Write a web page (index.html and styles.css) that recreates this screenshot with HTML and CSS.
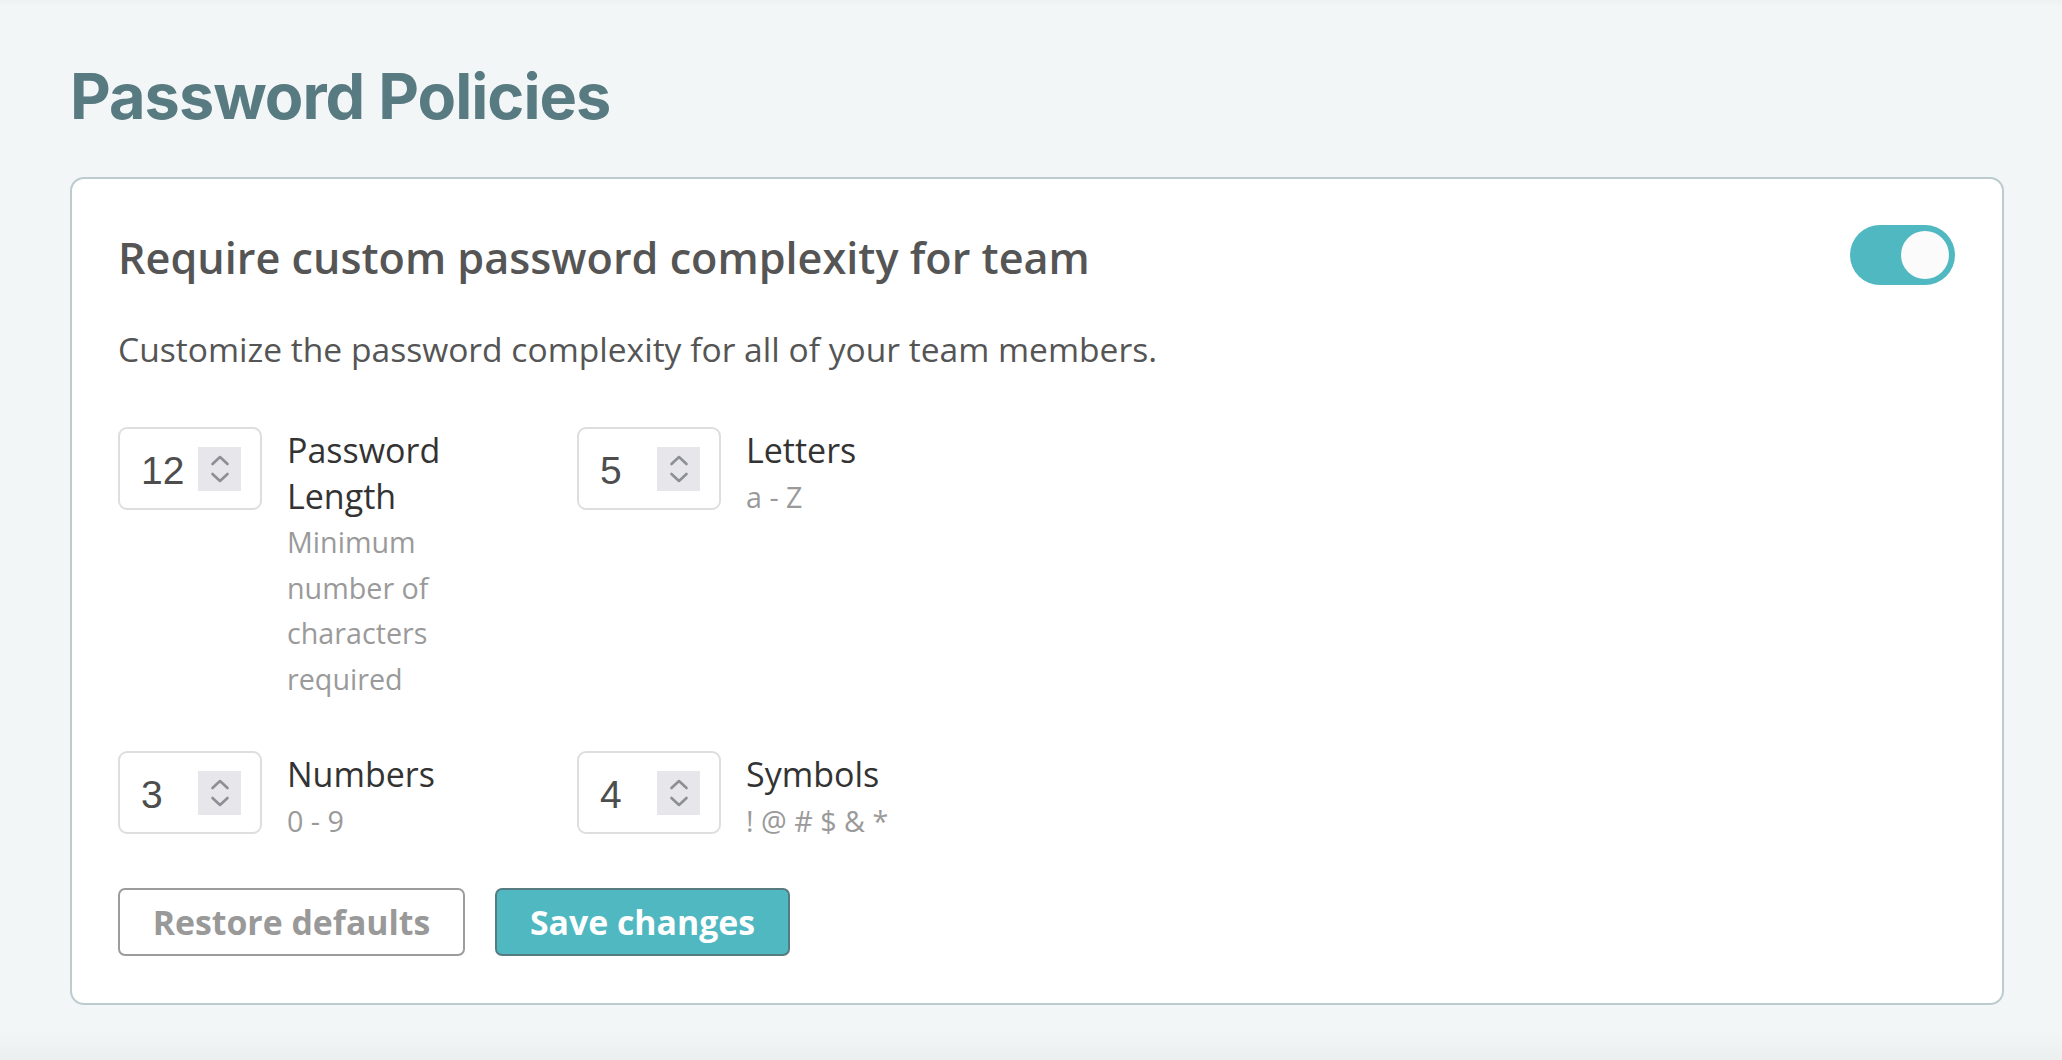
FILE: index.html
```html
<!DOCTYPE html>
<html lang="en">
<head>
<meta charset="utf-8">
<title>Password Policies</title>
<link rel="stylesheet" href="styles.css">
</head>
<body>
<main class="page">
  <h1 class="page-title">Password Policies</h1>
  <section class="card">
    <div class="card-header">
      <h2 class="card-title">Require custom password complexity for team</h2>
      <div class="toggle" role="switch" aria-checked="true"><span class="knob"></span></div>
    </div>
    <p class="card-desc">Customize the password complexity for all of your team members.</p>

    <div class="fields">
      <div class="field">
        <div class="num-box">
          <span class="num">12</span>
          <span class="spin"><svg width="20" height="30" viewBox="0 0 20 30"><path d="M2.5 10 L10 3 L17.5 10 M2.5 20 L10 27 L17.5 20" fill="none" stroke="#8e8e96" stroke-width="2.6" stroke-linecap="round" stroke-linejoin="round"/></svg></span>
        </div>
        <div class="field-text">
          <div class="field-label">Password Length</div>
          <div class="field-sub">Minimum number of characters required</div>
        </div>
      </div>
      <div class="field">
        <div class="num-box">
          <span class="num">5</span>
          <span class="spin"><svg width="20" height="30" viewBox="0 0 20 30"><path d="M2.5 10 L10 3 L17.5 10 M2.5 20 L10 27 L17.5 20" fill="none" stroke="#8e8e96" stroke-width="2.6" stroke-linecap="round" stroke-linejoin="round"/></svg></span>
        </div>
        <div class="field-text">
          <div class="field-label">Letters</div>
          <div class="field-sub">a - Z</div>
        </div>
      </div>
      <div class="field">
        <div class="num-box">
          <span class="num">3</span>
          <span class="spin"><svg width="20" height="30" viewBox="0 0 20 30"><path d="M2.5 10 L10 3 L17.5 10 M2.5 20 L10 27 L17.5 20" fill="none" stroke="#8e8e96" stroke-width="2.6" stroke-linecap="round" stroke-linejoin="round"/></svg></span>
        </div>
        <div class="field-text">
          <div class="field-label">Numbers</div>
          <div class="field-sub">0 - 9</div>
        </div>
      </div>
      <div class="field">
        <div class="num-box">
          <span class="num">4</span>
          <span class="spin"><svg width="20" height="30" viewBox="0 0 20 30"><path d="M2.5 10 L10 3 L17.5 10 M2.5 20 L10 27 L17.5 20" fill="none" stroke="#8e8e96" stroke-width="2.6" stroke-linecap="round" stroke-linejoin="round"/></svg></span>
        </div>
        <div class="field-text">
          <div class="field-label">Symbols</div>
          <div class="field-sub">! @ # $ &amp; *</div>
        </div>
      </div>
    </div>

    <div class="actions">
      <button class="btn btn-secondary" type="button">Restore defaults</button>
      <button class="btn btn-primary" type="button">Save changes</button>
    </div>
  </section>
</main>
</body>
</html>
```

FILE: styles.css
```css
* { box-sizing: border-box; }

html, body {
  margin: 0;
  height: 100%;
}

body {
  background: linear-gradient(to bottom, #eef1f2 0px, #f3f6f7 6px, #f3f6f7 1030px, #eceff0 1060px);
  font-family: "Open Sans", "Noto Sans", sans-serif;
  color: #555;
}

.page {
  padding: 0 58px 0 70px;
}

.page-title {
  margin: 0;
  padding-top: 52px;
  height: 177px;
  font-family: Inter, "Noto Sans", sans-serif;
  font-weight: 700;
  font-size: 63px;
  line-height: 88px;
  letter-spacing: -1px;
  color: #587a81;
}

.card {
  background: #fff;
  border: 2px solid #bccbce;
  border-radius: 14px;
  padding: 46px 46px 47px 46px;
}

.card-header {
  display: flex;
  align-items: center;
  justify-content: space-between;
  height: 60px;
  padding-right: 1px;
}

.card-title {
  margin: 0;
  padding-top: 5px;
  font-size: 43.2px;
  font-weight: 600;
  line-height: 60px;
  color: #555;
}

.toggle {
  width: 105px;
  height: 60px;
  border-radius: 30px;
  background: #4fb8c1;
  display: flex;
  align-items: center;
  justify-content: flex-end;
  padding-right: 6px;
}

.knob {
  width: 48px;
  height: 48px;
  border-radius: 50%;
  background: #fbfbfb;
}

.card-desc {
  margin: 42px 0 0;
  font-size: 33.6px;
  line-height: 45px;
  color: #555;
}

.fields {
  margin-top: 55px;
  display: grid;
  grid-template-columns: 419px 419px;
  column-gap: 40px;
  row-gap: 50px;
}

.field {
  display: flex;
  align-items: flex-start;
  gap: 25px;
}

.num-box {
  flex: none;
  width: 144px;
  height: 83px;
  border: 2px solid #dedede;
  border-radius: 9px;
  display: flex;
  align-items: center;
  justify-content: space-between;
  padding: 0 19px 0 21px;
}

.num {
  font-family: "Liberation Sans", Arial, sans-serif;
  font-size: 39px;
  padding-top: 5px;
  color: #4d4d4d;
}

.spin {
  width: 43px;
  height: 44px;
  background: #e6e6eb;
  display: flex;
  align-items: center;
  justify-content: center;
}

.field-text {
  width: 200px;
}

.field-label {
  padding-top: 1px;
  font-size: 34px;
  line-height: 45.5px;
  color: #333;
}

.field-sub {
  font-size: 28.7px;
  line-height: 45.5px;
  color: #9a9a9a;
}

.actions {
  margin-top: 45px;
  display: flex;
  gap: 30px;
}

.btn {
  height: 68px;
  border-radius: 7px;
  font-family: "Open Sans", "Noto Sans", sans-serif;
  font-weight: 700;
  font-size: 33.8px;
  padding: 0;
  cursor: pointer;
}

.btn-secondary {
  width: 347px;
  background: #fff;
  border: 2px solid #9c9c9c;
  color: #999;
}

.btn-primary {
  width: 295px;
  background: #4fb8c1;
  border: 2px solid #567c82;
  color: #fff;
}
```
